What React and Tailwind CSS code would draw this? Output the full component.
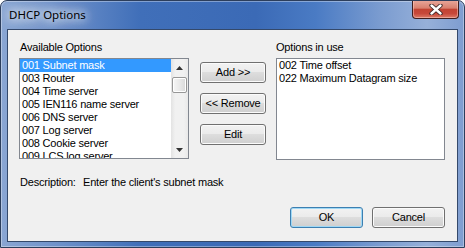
import React from "react";

function Btn({ children, w, def }) {
  return (
    <div
      className={`${w} h-[21px] flex items-center justify-center rounded-[3px] border ${
        def
          ? "border-[#3c7fb1] shadow-[inset_0_0_0_1px_#9fd8f5]"
          : "border-[#707070] shadow-[inset_0_0_0_1px_#fbfbfb]"
      } bg-[linear-gradient(180deg,#f2f2f2_0%,#ebebeb_45%,#dddddd_50%,#cfcfcf_100%)] text-black`}
    >
      {children}
    </div>
  );
}

function ScrollBar() {
  return (
    <div className="w-[17px] flex flex-col bg-[linear-gradient(90deg,#e3e3e3_0%,#f1f1f1_25%,#f1f1f1_75%,#e9e9e9_100%)]">
      <div className="h-[17px] flex items-center justify-center">
        <svg width="7" height="4" viewBox="0 0 7 4">
          <path d="M0 4 L3.5 0 L7 4 Z" fill="#333" />
        </svg>
      </div>
      <div className="mx-[1px] mt-[1px] h-[16px] rounded-[2px] border border-[#979797] bg-[linear-gradient(90deg,#f6f6f6_0%,#e9e9e9_50%,#d9d9d9_100%)] shadow-[inset_0_0_0_1px_#ffffff]" />
      <div className="flex-1" />
      <div className="h-[17px] flex items-center justify-center">
        <svg width="7" height="4" viewBox="0 0 7 4">
          <path d="M0 0 L3.5 4 L7 0 Z" fill="#333" />
        </svg>
      </div>
    </div>
  );
}

export default function App() {
  const left = [
    "001 Subnet mask",
    "003 Router",
    "004 Time server",
    "005 IEN116 name server",
    "006 DNS server",
    "007 Log server",
    "008 Cookie server",
    "009 LCS log server",
  ];
  const right = ["002 Time offset", "022 Maximum Datagram size"];

  return (
    <div className="w-[465px] h-[248px] relative flex flex-col rounded-t-[7px] border border-[#2c3e5c] bg-[linear-gradient(90deg,#8aa6d3_0%,#6f92ca_12%,#406fb9_30%,#3b6ab6_55%,#4a7bc4_68%,#7b9cd0_82%,#96b0d9_92%,#7e9dd0_100%)] shadow-[inset_0_0_0_1px_rgba(255,255,255,0.35)] font-['Liberation_Sans',Arial,sans-serif] text-[11px] leading-[13px] tracking-[-0.2px] text-black overflow-hidden">
      {/* title bar */}
      <div className="h-[28px] flex items-center pl-[8px] pb-[1px]">
        <span className="font-['Noto_Sans',sans-serif] text-[11.5px] leading-[16px] tracking-normal text-black [text-shadow:0_0_8px_#ffffff,0_0_12px_#ffffff,0_0_16px_#ffffff]">
          DHCP Options
        </span>
      </div>

      {/* close button */}
      <div className="absolute top-[-1px] right-[5px] w-[47px] h-[19px] rounded-b-[4px] border border-[#3f1e1e] border-t-0 bg-[linear-gradient(180deg,#e9a99c_0%,#d8806f_45%,#c24332_52%,#c7483a_75%,#dc7a66_100%)] shadow-[inset_0_0_0_1px_rgba(255,220,210,0.45)] flex items-center justify-center">
        <svg width="14" height="11" viewBox="0 0 14 11">
          <path d="M2.5 1.5 L11.5 9.5 M11.5 1.5 L2.5 9.5" stroke="#3a2323" strokeWidth="4.2" strokeLinecap="round" />
          <path d="M2.5 1.5 L11.5 9.5 M11.5 1.5 L2.5 9.5" stroke="#ffffff" strokeWidth="2.4" strokeLinecap="round" />
        </svg>
      </div>

      {/* client area */}
      <div className="flex-1 mx-[6px] mb-[5px] border border-[#34496b] bg-[#f0f0f0] flex flex-col pl-[11px] pr-[12px] pt-[11px]">
        <div className="flex">
          {/* left column */}
          <div className="w-[171px] flex flex-col">
            <div className="h-[13px] pl-[1px]">Available Options</div>
            <div className="mt-[4px] h-[101px] border border-[#828790] bg-white flex overflow-hidden">
              <div className="flex-1 flex flex-col overflow-hidden">
                {left.map((t, i) => (
                  <div
                    key={t}
                    className={`h-[13px] shrink-0 pl-[2px] whitespace-nowrap ${
                      i === 0 ? "bg-[#3399ff] text-white" : ""
                    }`}
                  >
                    {t}
                  </div>
                ))}
              </div>
              <ScrollBar />
            </div>
          </div>

          {/* middle buttons */}
          <div className="ml-[11px] pt-[21px] flex flex-col gap-[10px]">
            <Btn w="w-[66px]">Add &gt;&gt;</Btn>
            <Btn w="w-[66px]">&lt;&lt; Remove</Btn>
            <Btn w="w-[66px]">Edit</Btn>
          </div>

          {/* right column */}
          <div className="ml-[10px] w-[170px] flex flex-col">
            <div className="h-[13px]">Options in use</div>
            <div className="mt-[4px] h-[102px] border border-[#828790] bg-white flex flex-col">
              {right.map((t) => (
                <div key={t} className="h-[13px] pl-[2px] whitespace-nowrap">
                  {t}
                </div>
              ))}
            </div>
          </div>
        </div>

        {/* description */}
        <div className="mt-[16px] flex h-[13px] pl-[1px]">
          <div className="w-[63px]">Description:</div>
          <div>Enter the client's subnet mask</div>
        </div>

        {/* OK / Cancel */}
        <div className="mt-[18px] flex justify-end gap-[9px]">
          <Btn w="w-[73px]" def>
            OK
          </Btn>
          <Btn w="w-[73px]">Cancel</Btn>
        </div>
      </div>
    </div>
  );
}
